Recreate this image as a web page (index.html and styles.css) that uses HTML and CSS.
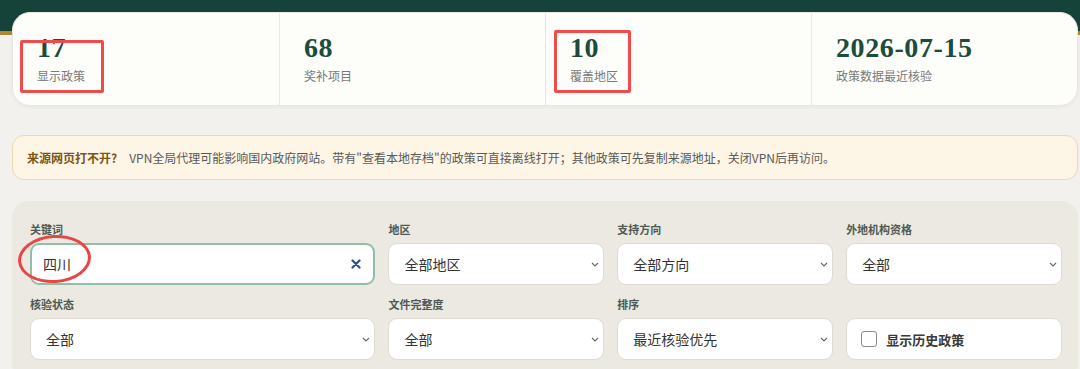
FILE: index.html
```html
<!DOCTYPE html>
<html lang="zh-CN">
<head>
  <meta charset="UTF-8">
  <meta name="viewport" content="width=device-width, initial-scale=1.0">
  <title>政策检索</title>
  <link rel="stylesheet" href="styles.css">
</head>
<body>
  <header class="topbar"></header>

  <main class="page">
    <section class="stats">
      <div class="stat">
        <div class="stat-value">17</div>
        <div class="stat-label">显示政策</div>
      </div>
      <div class="stat">
        <div class="stat-value">68</div>
        <div class="stat-label">奖补项目</div>
      </div>
      <div class="stat">
        <div class="stat-value">10</div>
        <div class="stat-label">覆盖地区</div>
      </div>
      <div class="stat">
        <div class="stat-value">2026-07-15</div>
        <div class="stat-label">政策数据最近核验</div>
      </div>
    </section>

    <div class="notice">
      <strong>来源网页打不开?</strong>VPN全局代理可能影响国内政府网站。带有"查看本地存档"的政策可直接离线打开；其他政策可先复制来源地址，关闭VPN后再访问。
    </div>

    <section class="filters">
      <div class="field">
        <label class="field-label" for="keyword">关键词</label>
        <div class="control">
          <input id="keyword" class="text-input" type="text" value="四川">
          <button class="clear" type="button" aria-label="清除">
            <svg width="10" height="10" viewBox="0 0 10 10"><path d="M1.5 1.5 8.5 8.5M8.5 1.5 1.5 8.5" stroke="#2c4f8c" stroke-width="2.2" stroke-linecap="round"/></svg>
          </button>
        </div>
      </div>
      <div class="field">
        <label class="field-label">地区</label>
        <div class="control">
          <select class="select"><option>全部地区</option></select>
          <svg class="chevron" width="8" height="5" viewBox="0 0 8 5"><path d="M1 1 4 4 7 1" fill="none" stroke="#666" stroke-width="1.1"/></svg>
        </div>
      </div>
      <div class="field">
        <label class="field-label">支持方向</label>
        <div class="control">
          <select class="select"><option>全部方向</option></select>
          <svg class="chevron" width="8" height="5" viewBox="0 0 8 5"><path d="M1 1 4 4 7 1" fill="none" stroke="#666" stroke-width="1.1"/></svg>
        </div>
      </div>
      <div class="field">
        <label class="field-label">外地机构资格</label>
        <div class="control">
          <select class="select"><option>全部</option></select>
          <svg class="chevron" width="8" height="5" viewBox="0 0 8 5"><path d="M1 1 4 4 7 1" fill="none" stroke="#666" stroke-width="1.1"/></svg>
        </div>
      </div>

      <div class="field">
        <label class="field-label">核验状态</label>
        <div class="control">
          <select class="select"><option>全部</option></select>
          <svg class="chevron" width="8" height="5" viewBox="0 0 8 5"><path d="M1 1 4 4 7 1" fill="none" stroke="#666" stroke-width="1.1"/></svg>
        </div>
      </div>
      <div class="field">
        <label class="field-label">文件完整度</label>
        <div class="control">
          <select class="select"><option>全部</option></select>
          <svg class="chevron" width="8" height="5" viewBox="0 0 8 5"><path d="M1 1 4 4 7 1" fill="none" stroke="#666" stroke-width="1.1"/></svg>
        </div>
      </div>
      <div class="field">
        <label class="field-label">排序</label>
        <div class="control">
          <select class="select"><option>最近核验优先</option></select>
          <svg class="chevron" width="8" height="5" viewBox="0 0 8 5"><path d="M1 1 4 4 7 1" fill="none" stroke="#666" stroke-width="1.1"/></svg>
        </div>
      </div>
      <div class="field">
        <span class="field-label">&nbsp;</span>
        <label class="check-box">
          <input type="checkbox" class="check">
          <span>显示历史政策</span>
        </label>
      </div>
    </section>
  </main>

  <!-- screenshot annotations -->
  <div class="mark mark-rect mark-a"></div>
  <div class="mark mark-rect mark-b"></div>
  <div class="mark mark-oval"></div>
</body>
</html>
```

FILE: styles.css
```css
* {
  box-sizing: border-box;
}
body {
  margin: 0;
  font-family: "Noto Sans CJK SC", "Noto Sans", sans-serif;
  background-color: #f2f1ed;
  color: #333;
  height: 369px;
  overflow: hidden;
}
.topbar {
  height: 35px;
  background-color: #15433a;
  border-bottom: 4px solid #b3852f;
}
.page {
  padding: 0 2px 0 12px;
}
.stats {
  display: grid;
  grid-template-columns: repeat(4, 1fr);
  margin-top: -23px;
  background-color: #fdfdf9;
  border: 1px solid #e9e7df;
  border-radius: 18px;
  box-shadow: 0 1px 4px rgba(0, 0, 0, 0.05);
  position: relative;
}
.stat {
  padding: 19px 24px 21px;
  border-left: 1px solid #ebe8e0;
}
.stat:first-child {
  border-left: none;
}
.stat-value {
  font-family: "Liberation Serif", serif;
  font-weight: bold;
  font-size: 28px;
  line-height: 32px;
  letter-spacing: 0.6px;
  color: #1c4c3c;
}
.stat-label {
  margin-top: 3px;
  font-size: 12px;
  line-height: 17px;
  color: #7a7a7a;
}
.notice {
  margin-top: 29px;
  padding: 13px 14px;
  font-size: 12px;
  line-height: 17px;
  color: #5a5a5a;
  background-color: #fdf5e5;
  border: 1px solid #ead9b2;
  border-radius: 12px;
}
.notice strong {
  color: #7a5618;
  margin-right: 12px;
}
.filters {
  display: grid;
  grid-template-columns: 1.6fr 1fr 1fr 1fr;
  gap: 11px 13px;
  margin-top: 21px;
  padding: 20px 16px 20px 18px;
  background-color: #ebe9e2;
  border-radius: 16px;
}
.field {
  display: flex;
  flex-direction: column;
  gap: 6px;
}
.field-label {
  font-size: 11px;
  line-height: 16px;
  font-weight: bold;
  color: #4e5a53;
}
.control {
  position: relative;
}
.text-input,
.select {
  display: block;
  width: 100%;
  height: 42px;
  font-family: inherit;
  font-size: 14px;
  color: #333;
  background-color: #fff;
  border-radius: 9px;
  outline: none;
}
.text-input {
  padding: 0 36px 0 11px;
  border: 2px solid #92bea8;
}
.select {
  appearance: none;
  -webkit-appearance: none;
  padding: 0 26px 0 15px;
  border: 1px solid #dfdbd2;
}
.chevron {
  position: absolute;
  right: 5px;
  top: 19px;
  pointer-events: none;
}
.clear {
  position: absolute;
  right: 14px;
  top: 16px;
  padding: 0;
  border: none;
  background: none;
  line-height: 0;
  cursor: pointer;
}
.check-box {
  display: flex;
  align-items: center;
  gap: 9px;
  height: 42px;
  padding: 0 14px;
  background-color: #fff;
  border: 1px solid #dfdbd2;
  border-radius: 9px;
  font-size: 13px;
  font-weight: bold;
  color: #3a3a3a;
}
.check {
  appearance: none;
  -webkit-appearance: none;
  margin: 0;
  width: 16px;
  height: 16px;
  border: 1px solid #8a8a8a;
  border-radius: 3px;
  background-color: #fff;
}
.mark {
  position: absolute;
  border: 3px solid #ef4b4b;
  pointer-events: none;
}
.mark-rect {
  border-radius: 2px;
}
.mark-a {
  left: 20px;
  top: 40px;
  width: 84px;
  height: 53px;
}
.mark-b {
  left: 554px;
  top: 30px;
  width: 77px;
  height: 63px;
}
.mark-oval {
  left: 18px;
  top: 235px;
  width: 73px;
  height: 48px;
  border-radius: 50%;
  border-color: #e84646;
  transform: rotate(-4deg);
}
```
